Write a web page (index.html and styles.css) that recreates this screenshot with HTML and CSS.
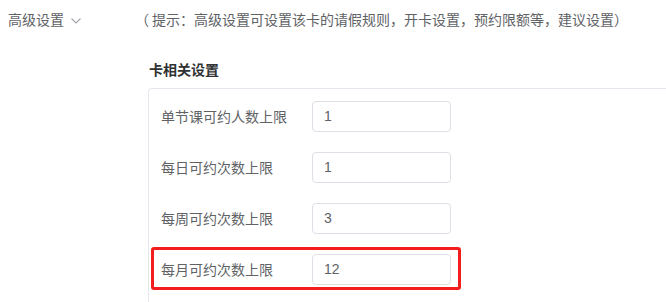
FILE: index.html
```html
<!DOCTYPE html>
<html lang="zh-CN">
<head>
<meta charset="utf-8">
<title>高级设置</title>
<link rel="stylesheet" href="styles.css">
</head>
<body>
<div class="header">
  <div class="toggle">
    <span>高级设置</span>
    <svg class="chev" width="10" height="6" viewBox="0 0 10 6"><path d="M0.5 0.5 L5 5 L9.5 0.5" fill="none" stroke="#a0a3a8" stroke-width="1.1"/></svg>
  </div>
  <div class="hint"><span class="paren open">（</span>提示：高级设置可设置该卡的请假规则，开卡设置，预约限额等，建议设置<span class="paren close">）</span></div>
</div>
<div class="section">
  <div class="section-title">卡相关设置</div>
  <div class="card">
    <div class="row">
      <div class="label">单节课可约人数上限</div>
      <div class="input">1</div>
    </div>
    <div class="row">
      <div class="label">每日可约次数上限</div>
      <div class="input">1</div>
    </div>
    <div class="row">
      <div class="label">每周可约次数上限</div>
      <div class="input">3</div>
    </div>
    <div class="row highlight">
      <div class="label">每月可约次数上限</div>
      <div class="input">12</div>
    </div>
  </div>
</div>
</body>
</html>
```
FILE: styles.css
```css
html, body {
  margin: 0;
  padding: 0;
  background: #fff;
  overflow: hidden;
}
body {
  font-family: "Liberation Sans", "Noto Sans CJK SC", sans-serif;
  font-size: 14px;
  color: #606266;
  width: 666px;
  height: 302px;
}
.header {
  display: flex;
  align-items: center;
  padding: 10px 0 0 8px;
  height: 20px;
  line-height: 20px;
}
.toggle {
  width: 130px;
  display: flex;
  align-items: center;
}
.chev {
  margin-left: 7px;
  margin-top: 1px;
}
.hint {
  white-space: nowrap;
  display: flex;
}
.paren {
  display: inline-block;
  width: 14px;
  text-align: left;
  overflow: visible;
}
.paren.open {
  text-indent: -3px;
}
.section {
  margin-left: 148px;
  margin-top: 30px;
}
.section-title {
  font-weight: bold;
  color: #303133;
  line-height: 20px;
  padding-left: 1px;
  margin-bottom: 8px;
}
.card {
  border: 1px solid #e4e7ed;
  border-right: none;
  border-radius: 4px 0 0 0;
  padding: 12px 0 30px 12px;
  display: flex;
  flex-direction: column;
  gap: 20px;
}
.row {
  position: relative;
  display: flex;
  align-items: center;
  width: 290px;
  height: 31px;
}
.label {
  width: 151px;
  line-height: 20px;
}
.input {
  box-sizing: border-box;
  width: 139px;
  height: 31px;
  border: 1px solid #dcdfe6;
  border-radius: 4px;
  padding-left: 11px;
  line-height: 29px;
  color: #606266;
}
.highlight::after {
  content: "";
  position: absolute;
  top: -7px;
  bottom: -5px;
  left: -10px;
  right: -10px;
  border: 3px solid #f41d1d;
  border-radius: 3px;
}
```
